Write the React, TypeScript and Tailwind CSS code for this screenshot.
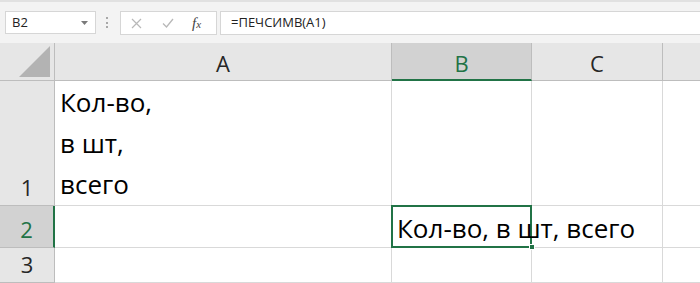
import React from "react";

const font = { fontFamily: '"Open Sans", "Noto Sans", sans-serif' };

function Toolbar() {
  return (
    <div className="flex h-[43px] items-start border-t-2 border-[#e1e1e1] bg-[#f3f3f3] pt-[9px]">
      <div className="ml-[5px] flex h-[23px] w-[91px] items-center justify-between border border-[#d6d6d6] bg-white pl-[6px] pr-[7px] text-[13px] text-[#222]">
        <span>B2</span>
        <svg width="7" height="4" viewBox="0 0 7 4">
          <path d="M0 0h7L3.5 4z" fill="#7a7a7a" />
        </svg>
      </div>
      <div className="ml-[10px] mt-[6px] flex h-[11px] w-[2px] flex-col justify-between">
        <span className="h-[2px] w-[2px] bg-[#a8a8a8]" />
        <span className="h-[2px] w-[2px] bg-[#a8a8a8]" />
        <span className="h-[2px] w-[2px] bg-[#a8a8a8]" />
      </div>
      <div className="ml-[12px] flex h-[24px] w-[97px] items-center border border-[#d6d6d6] bg-white">
        <svg className="ml-[10px]" width="11" height="11" viewBox="0 0 11 11">
          <path d="M1 1l9 9M10 1l-9 9" stroke="#b8b8b8" strokeWidth="1.2" />
        </svg>
        <svg className="ml-[20px]" width="12" height="10" viewBox="0 0 12 10">
          <path d="M1 5.5l3.5 3.5L11 1" stroke="#b8b8b8" strokeWidth="1.3" fill="none" />
        </svg>
        <span
          className="ml-[18px] text-[15px] italic text-[#444]"
          style={{ fontFamily: '"Liberation Serif", serif' }}
        >
          f<span className="text-[11px]">x</span>
        </span>
      </div>
      <div className="ml-[3px] flex h-[24px] flex-1 items-center border border-r-0 border-[#d6d6d6] bg-white pl-[10px] text-[13px] text-[#222]">
        =ПЕЧСИМВ(A1)
      </div>
    </div>
  );
}

export default function App() {
  const hdr = "flex items-end justify-center border-r border-b border-[#bdbdbd] bg-[#e6e6e6] text-[22px] leading-[30px] text-[#262626]";
  const cell = "border-r border-b border-[#d9d9d9]";
  const rowHdr = "flex items-end justify-center border-r border-b border-[#bdbdbd] bg-[#e6e6e6] text-[22px] leading-[30px] text-[#262626] pb-[3px]";

  return (
    <div className="h-[283px] w-[700px] overflow-hidden bg-white" style={font}>
      <Toolbar />
      <div className="grid grid-cols-[55px_337px_140px_131px_1fr] grid-rows-[38px_125px_42px_1fr] h-[240px] bg-white">
        {/* header row */}
        <div className="relative border-r border-b border-[#bdbdbd] bg-[#e6e6e6]">
          <svg className="absolute right-[4px] bottom-[3px]" width="31" height="31" viewBox="0 0 31 31">
            <path d="M31 0V31H0z" fill="#b3b3b3" />
          </svg>
        </div>
        <div className={hdr + " pb-[2px]"}>A</div>
        <div className="flex items-end justify-center border-r border-b-2 border-r-[#bdbdbd] border-b-[#217346] bg-[#d2d2d2] pb-[1px] text-[22px] leading-[30px] text-[#217346]">
          B
        </div>
        <div className={hdr + " pb-[2px]"}>C</div>
        <div className="border-b border-[#bdbdbd] bg-[#e6e6e6]" />

        {/* row 1 */}
        <div className={rowHdr}>1</div>
        <div className={cell + " flex items-end pl-[5px] text-[26px] leading-[41px] text-black"}>
          <div>
            Кол-во,
            <br />в шт,
            <br />
            всего
          </div>
        </div>
        <div className={cell} />
        <div className={cell} />
        <div className="border-b border-[#d9d9d9]" />

        {/* row 2 */}
        <div className="flex items-end justify-center border-r-2 border-b border-r-[#217346] border-b-[#bdbdbd] bg-[#d2d2d2] pb-[3px] text-[22px] leading-[30px] text-[#217346]">
          2
        </div>
        <div className={cell} />
        <div className="relative border-b border-[#d9d9d9]">
          <div className="absolute -left-px -top-px h-[43px] w-[141px] border-2 border-[#217346]" />
          <div className="absolute -right-[3px] -bottom-[3px] h-[6px] w-[6px] border border-white bg-[#217346]" />
          <div className="absolute left-[5px] bottom-[2px] whitespace-nowrap text-[26px] leading-[34px] text-black">
            Кол-во, в шт, всего
          </div>
        </div>
        <div className={cell} />
        <div className="border-b border-[#d9d9d9]" />

        {/* row 3 */}
        <div className={rowHdr}>3</div>
        <div className={cell} />
        <div className={cell} />
        <div className={cell} />
        <div className="border-b border-[#d9d9d9]" />
      </div>
    </div>
  );
}
